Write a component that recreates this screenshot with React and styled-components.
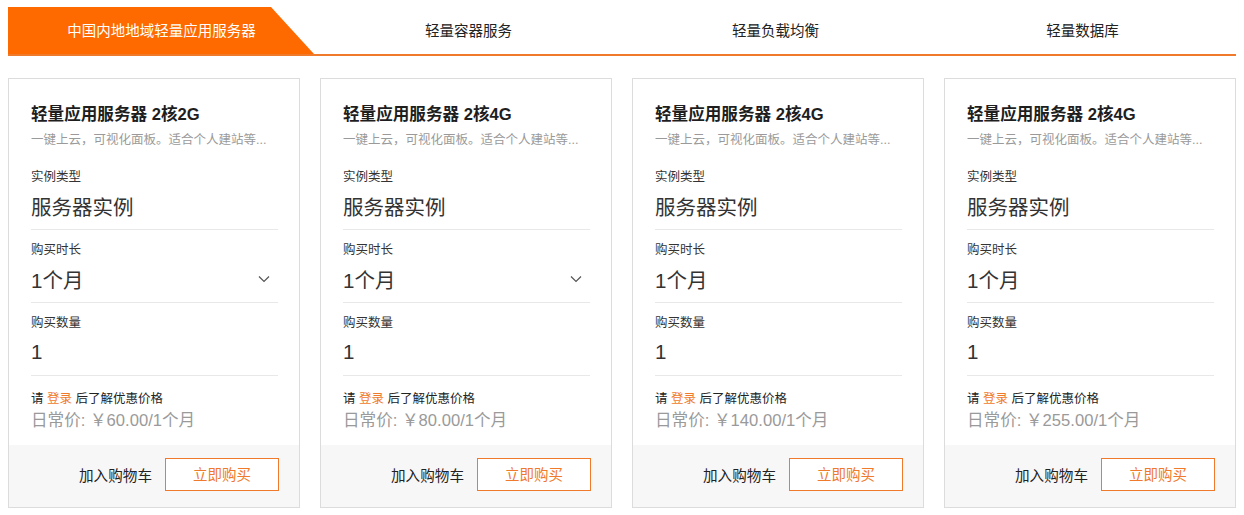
import React from "react";
import styled, { createGlobalStyle } from "styled-components";

const Global = createGlobalStyle`
  html, body { margin: 0; padding: 0; background: #fff; }
  body { font-family: "Liberation Sans", Arial, "Noto Sans CJK SC", sans-serif; color: #333; }
  * { box-sizing: border-box; }
`;

const ORANGE = "#ff6a00";
const LINE = "#ef7a2c";

const Page = styled.div`
  padding: 7px 8px 0 8px;
  width: 1244px;
`;

const TabBar = styled.div`
  display: grid;
  grid-template-columns: repeat(4, 1fr);
  border-bottom: 2px solid ${LINE};
  height: 49px;
`;

const Tab = styled.div`
  display: flex;
  align-items: center;
  justify-content: center;
  font-size: 14.5px;
  height: 47px;
  padding-bottom: 3px;
  color: ${(p) => (p.$active ? "#fff" : "#222")};
  background: ${(p) => (p.$active ? ORANGE : "transparent")};
  clip-path: ${(p) =>
    p.$active ? "polygon(0 0, 263px 0, 306px 100%, 0 100%)" : "none"};
`;

const Cards = styled.div`
  display: grid;
  grid-template-columns: repeat(4, 292px);
  column-gap: 20px;
  margin-top: 22px;
`;

const Card = styled.div`
  border: 1px solid #dcdcdc;
  height: 430px;
  display: flex;
  flex-direction: column;
`;

const Body = styled.div`
  padding: 24px 21px 0 22px;
  flex: 1;
`;

const Title = styled.div`
  font-size: 16.6px;
  font-weight: bold;
  line-height: 24px;
  color: #1e1e1e;
`;

const Sub = styled.div`
  font-size: 12.5px;
  line-height: 18px;
  margin-top: 4px;
  color: #9a9a9a;
  margin-bottom: 8px;
  white-space: nowrap;
`;

const Field = styled.div`
  padding: 11px 0 8px;
  border-bottom: 1px solid #e8e8e8;
`;

const Label = styled.div`
  font-size: 12.5px;
  line-height: 18px;
  color: #333;
`;

const ValueRow = styled.div`
  margin-top: 5px;
  display: flex;
  align-items: center;
  justify-content: space-between;
  height: 30px;
  font-size: 20.5px;
  color: #333;
`;

const Chevron = styled.svg`
  width: 12px;
  height: 8px;
  margin-right: 8px;
`;

const Login = styled.div`
  margin-top: 14px;
  font-size: 12.5px;
  line-height: 18px;
  color: #222;
`;

const Link = styled.span`
  color: ${LINE};
`;

const Price = styled.div`
  font-size: 16.6px;
  line-height: 22px;
  margin-top: 2px;
  color: #9a9a9a;
`;

const Footer = styled.div`
  height: 62px;
  background: #f7f7f7;
  display: flex;
  align-items: center;
  justify-content: flex-end;
  padding: 0 20px 3px 0;
  gap: 13px;
`;

const CartBtn = styled.span`
  font-size: 14.6px;
  color: #222;
`;

const BuyBtn = styled.button`
  width: 114px;
  height: 33px;
  border: 1px solid ${LINE};
  background: #fff;
  color: ${LINE};
  font-size: 14.5px;
  font-family: inherit;
  padding: 0 0 2px;
`;

const tabs = ["中国内地地域轻量应用服务器", "轻量容器服务", "轻量负载均衡", "轻量数据库"];

const cards = [
  { title: "轻量应用服务器 2核2G", price: "60.00", select: true },
  { title: "轻量应用服务器 2核4G", price: "80.00", select: true },
  { title: "轻量应用服务器 2核4G", price: "140.00", select: false },
  { title: "轻量应用服务器 2核4G", price: "255.00", select: false },
];

export default function App() {
  return (
    <Page>
      <Global />
      <TabBar>
        {tabs.map((t, i) => (
          <Tab key={t} $active={i === 0}>
            {t}
          </Tab>
        ))}
      </TabBar>
      <Cards>
        {cards.map((c, i) => (
          <Card key={i}>
            <Body>
              <Title>{c.title}</Title>
              <Sub>一键上云，可视化面板。适合个人建站等...</Sub>
              <Field>
                <Label>实例类型</Label>
                <ValueRow>服务器实例</ValueRow>
              </Field>
              <Field>
                <Label>购买时长</Label>
                <ValueRow>
                  <span>1个月</span>
                  {c.select && (
                    <Chevron viewBox="0 0 12 8">
                      <path d="M1 1.5 L6 6.5 L11 1.5" fill="none" stroke="#555" strokeWidth="1.2" />
                    </Chevron>
                  )}
                </ValueRow>
              </Field>
              <Field>
                <Label>购买数量</Label>
                <ValueRow>1</ValueRow>
              </Field>
              <Login>
                请 <Link>登录</Link> 后了解优惠价格
              </Login>
              <Price>日常价: ￥{c.price}/1个月</Price>
            </Body>
            <Footer>
              <CartBtn>加入购物车</CartBtn>
              <BuyBtn>立即购买</BuyBtn>
            </Footer>
          </Card>
        ))}
      </Cards>
    </Page>
  );
}
